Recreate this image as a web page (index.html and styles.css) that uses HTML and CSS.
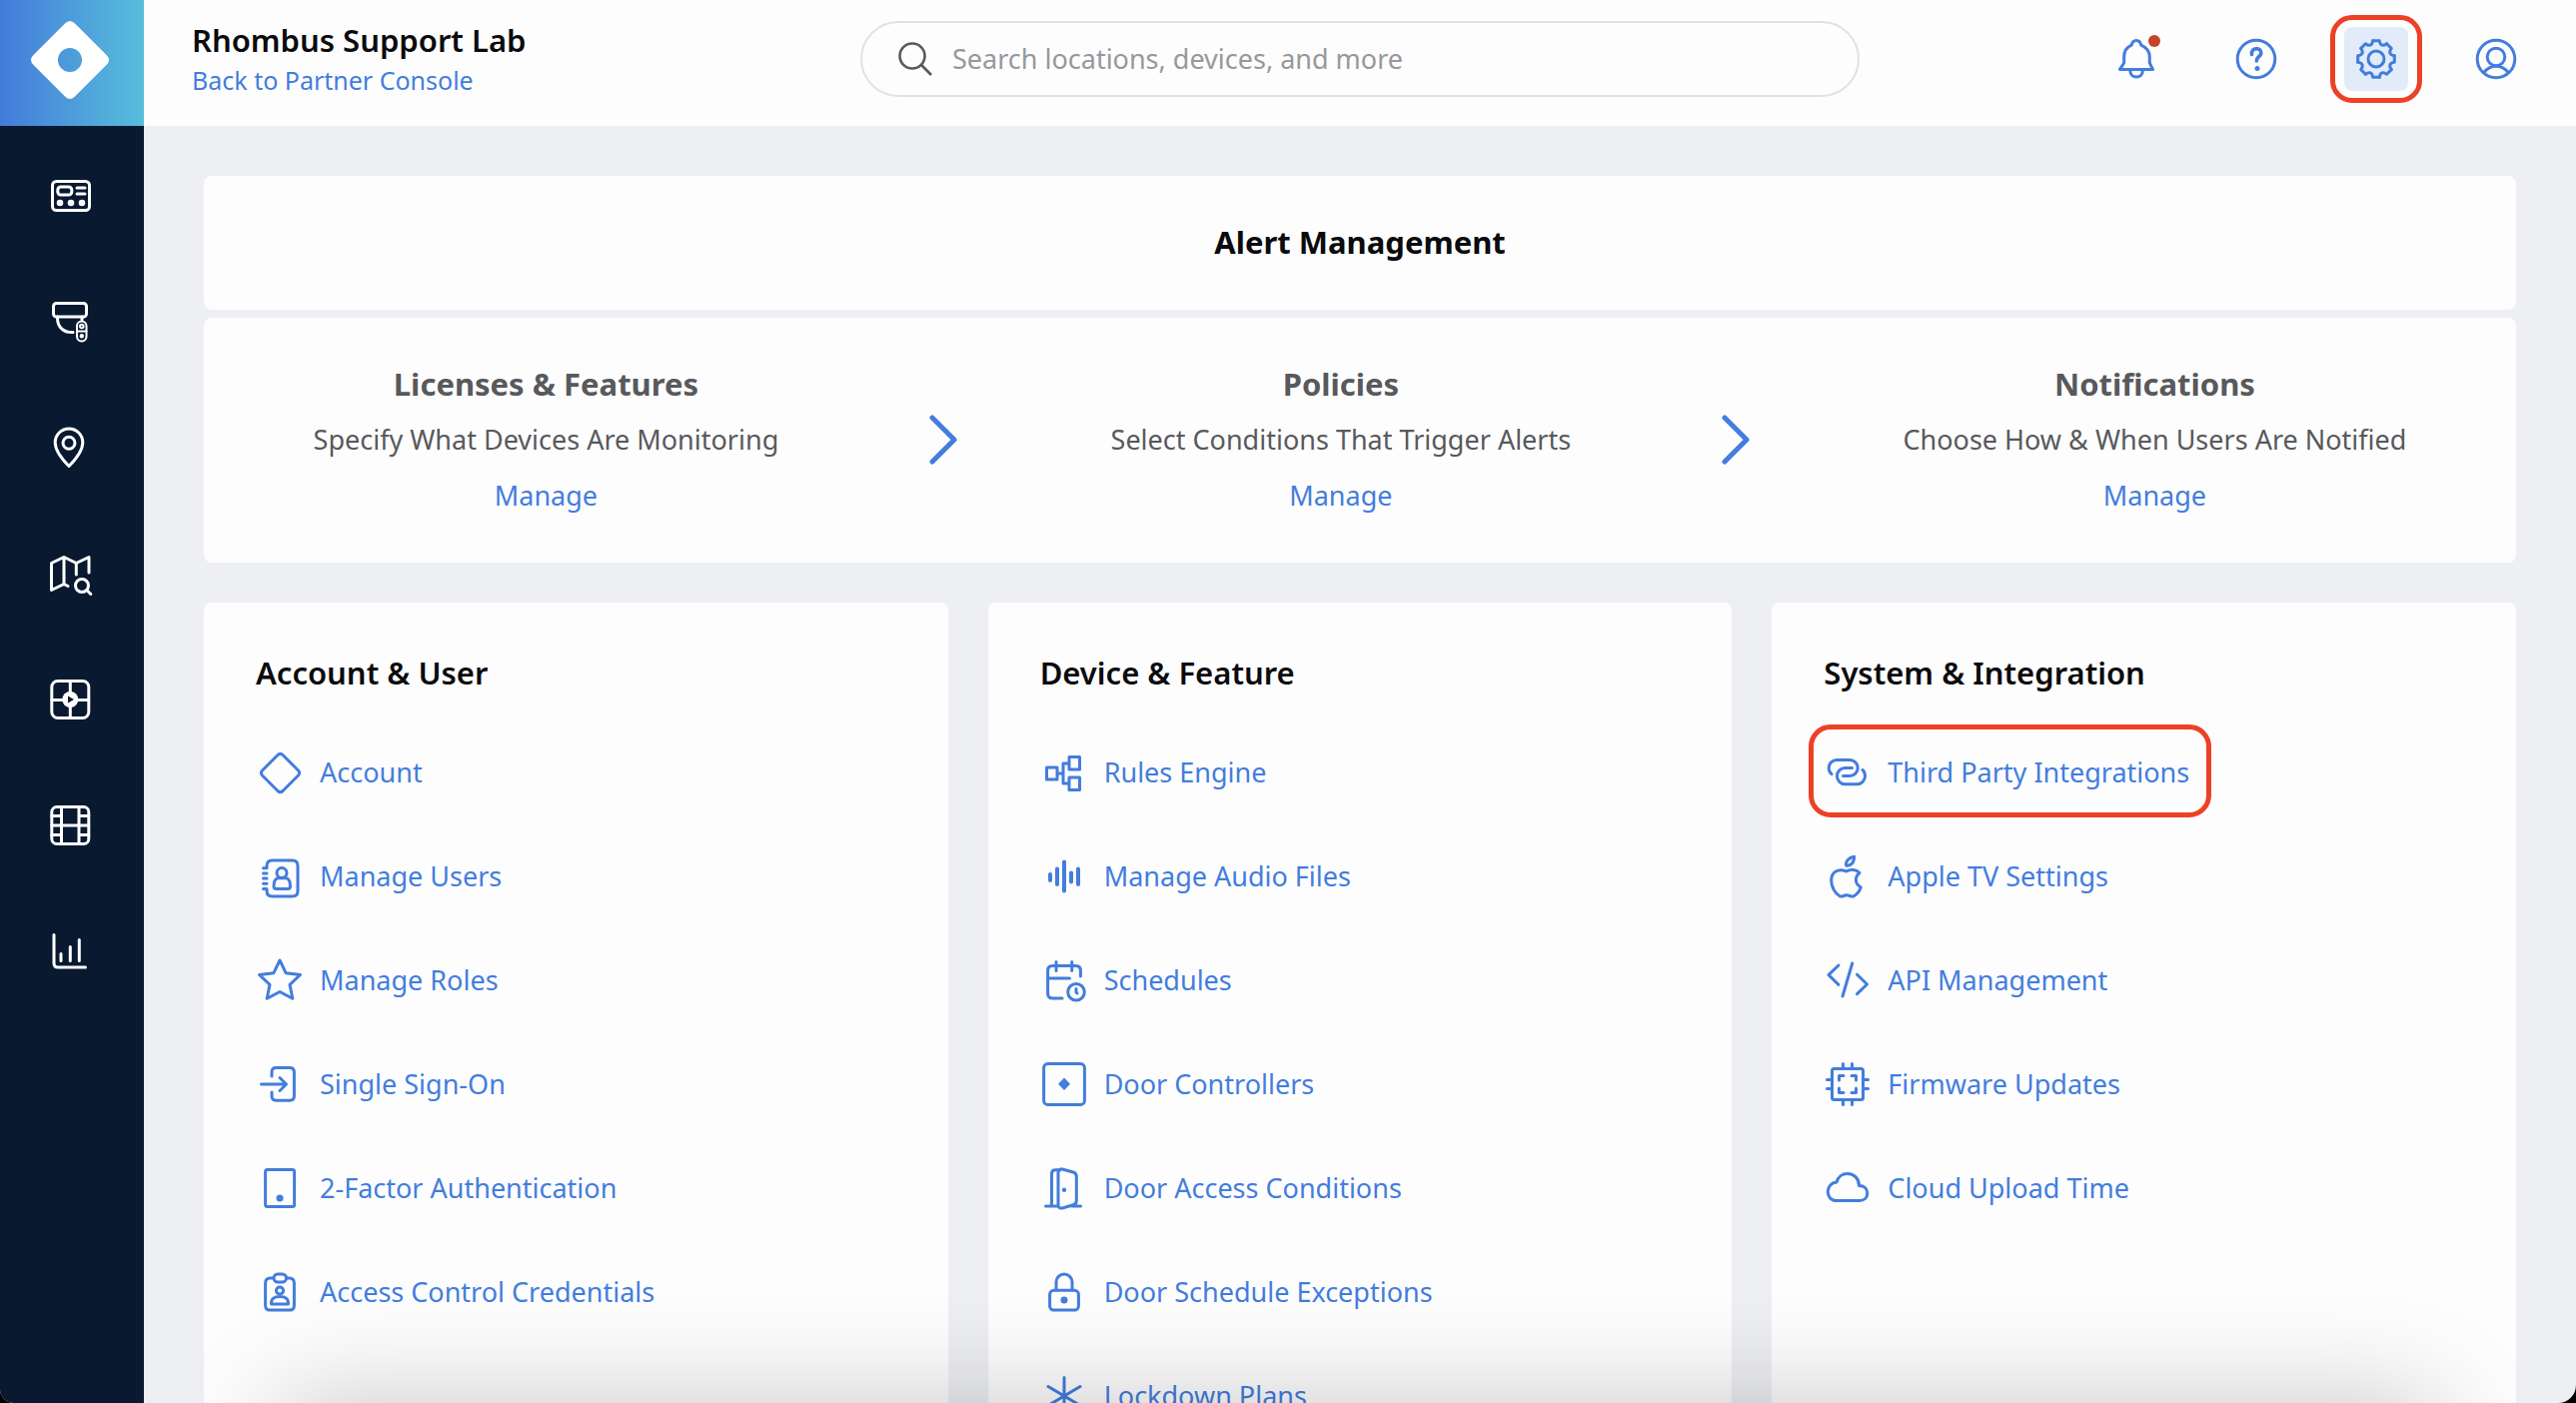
FILE: index.html
```html
<!DOCTYPE html>
<html lang="en">
<head>
<meta charset="utf-8">
<meta name="viewport" content="width=device-width, initial-scale=1">
<title>Settings - Rhombus Support Lab</title>
<link rel="stylesheet" href="styles.css">
</head>
<body>
<div class="app">
  <nav class="sidebar" aria-label="Main">
    <a class="logo" href="#" aria-label="Home">
      <svg viewBox="0 0 144 126"><path class="fill" fill-rule="evenodd" d="M65 23.5Q70 18.500 75 23.500L106.500 55Q111.500 60 106.500 65L75 96.500Q70 101.500 65 96.500L33.500 65Q28.500 60 33.500 55ZM70 48a12 12 0 1 0 0 24a12 12 0 1 0 0-24Z"/></svg>
    </a>
    <ul class="side-nav">
      <li><a class="side-link" href="#" aria-label="Dashboard"><svg class="icon" viewBox="0 0 48 48"><rect x="4.500" y="9.500" width="37" height="29" rx="4"/><rect x="9.800" y="15" width="14" height="8" rx="3"/><path d="M29 16h8M29 22h8"/><circle cx="12" cy="31" r="1.800"/><circle cx="23" cy="31" r="1.800"/><circle cx="34" cy="31" r="1.800"/></svg></a></li>
      <li><a class="side-link" href="#" aria-label="Devices"><svg class="icon" viewBox="0 0 48 48"><rect x="5.500" y="5.500" width="33" height="13.500" rx="3"/><path d="M9.500 19v1.500c0 9 6.500 14.500 15.500 14M34 19v3"/><rect class="thin" x="29" y="23.500" width="9.500" height="20" rx="4.700"/><path class="thin" d="M29 33.500h9.500"/><circle class="thin" cx="33.800" cy="28.500" r="1.800"/><circle class="fill" cx="33.800" cy="38.300" r="2.200"/></svg></a></li>
      <li><a class="side-link" href="#" aria-label="Locations"><svg class="icon" viewBox="0 0 48 48"><path d="M21 42.500C14 35.500 7.200 27 7.200 18.800a13.800 13.800 0 0 1 27.600 0C34.800 27 28 35.500 21 42.500Z"/><circle cx="21" cy="19.300" r="6"/></svg></a></li>
      <li><a class="side-link" href="#" aria-label="Map search"><svg class="icon" viewBox="0 0 48 48"><path d="M41 23V7.500L28.300 13.500 16 7.500 3.500 13.500V40.500L16 34.500 20 36.500M16 7.500v27M28.300 13.500V25"/><circle cx="34" cy="36" r="6.500"/><path d="M38.800 40.500l4 4"/></svg></a></li>
      <li><a class="side-link" href="#" aria-label="Video wall"><svg class="icon" viewBox="0 0 48 48"><rect x="3.800" y="5.500" width="37" height="37" rx="6"/><path d="M22.300 5.500v37M3.800 24.500h37"/><circle class="fill" cx="22.300" cy="24" r="8"/><path class="dark" d="M20 20.500v7l6-3.500z"/></svg></a></li>
      <li><a class="side-link" href="#" aria-label="Saved clips"><svg class="icon" viewBox="0 0 48 48"><rect x="3.800" y="5.500" width="37" height="37" rx="5"/><path d="M13.500 5.500v37M31 5.500v37M13.500 24h17.500M3.800 14.600h9.700M3.800 24h9.700M3.800 33.500h9.700M31 14.600h9.800M31 24h9.800M31 33.500h9.800"/></svg></a></li>
      <li><a class="side-link" href="#" aria-label="Reports"><svg class="icon" viewBox="0 0 48 48"><path d="M6 7.500V36q0 4 4 4h27.500M13 26.500v7M22.300 19.500v14M31.300 12.500v21"/></svg></a></li>
    </ul>
  </nav>

  <header class="topbar">
    <div class="org">
      <strong class="org-name">Rhombus Support Lab</strong>
      <a class="org-link" href="#">Back to Partner Console</a>
    </div>
    <label class="search">
      <svg class="search-icon" viewBox="0 0 34 34" aria-hidden="true"><circle cx="14" cy="14" r="12.500"/><path d="M23 23l10 10"/></svg>
      <input class="search-input" type="text" placeholder="Search locations, devices, and more" aria-label="Search">
    </label>
    <div class="actions">
      <button class="action" type="button" aria-label="Notifications"><svg class="icon" viewBox="0 0 64 64"><path d="M15.500 42.400h33L45.300 36V30C45.300 24.500 42 20.500 36.800 18.200C36.200 15 34.500 13.400 32 13.400S27.800 15 27.200 18.200C22 20.500 19.700 24.500 19.700 30V36ZM25.800 43.500c0 8.800 12.600 8.800 12.600 0"/></svg><span class="badge"></span></button>
      <button class="action" type="button" aria-label="Help"><svg class="icon" viewBox="0 0 64 64"><circle cx="32" cy="32" r="18.800"/><path class="bold" d="M27.500 27.500c-1-7.500 9.800-7.200 9.400-1.500C36.700 29.500 32.500 29.500 32.300 34"/><circle class="fill" cx="33" cy="41.500" r="2.500"/></svg></button>
      <button class="action is-active" type="button" aria-label="Settings"><svg class="icon" viewBox="0 0 64 64"><defs><path id="cog" d="M-3.300-18.300H3.300C4-13.500 6.700-12.400 10.600-15.300"/></defs><g transform="translate(32 32)"><use href="#cog"/><use href="#cog" transform="rotate(45)"/><use href="#cog" transform="rotate(90)"/><use href="#cog" transform="rotate(135)"/><use href="#cog" transform="rotate(180)"/><use href="#cog" transform="rotate(225)"/><use href="#cog" transform="rotate(270)"/><use href="#cog" transform="rotate(315)"/><circle r="8"/></g></svg></button>
      <button class="action" type="button" aria-label="Profile"><svg class="icon" viewBox="0 0 64 64"><circle cx="32" cy="32" r="18.800"/><circle cx="32" cy="30" r="8.800"/><path d="M19.800 45.500c6.500-8.500 17.900-8.500 24.400 0"/></svg></button>
    </div>
  </header>

  <main class="content">
    <section class="alerts">
      <h1 class="card alerts-title">Alert Management</h1>
      <div class="card steps">
        <div class="step"><h2 class="step-title">Licenses &amp; Features</h2><p class="step-text">Specify What Devices Are Monitoring</p><a class="step-link" href="#">Manage</a></div>
        <svg class="chevron" viewBox="0 0 30 52" aria-hidden="true"><path d="M3 4l22 22L3 48"/></svg>
        <div class="step"><h2 class="step-title">Policies</h2><p class="step-text">Select Conditions That Trigger Alerts</p><a class="step-link" href="#">Manage</a></div>
        <svg class="chevron" viewBox="0 0 30 52" aria-hidden="true"><path d="M3 4l22 22L3 48"/></svg>
        <div class="step"><h2 class="step-title">Notifications</h2><p class="step-text">Choose How &amp; When Users Are Notified</p><a class="step-link" href="#">Manage</a></div>
      </div>
    </section>

    <div class="columns">
      <section class="card group">
        <h2 class="group-title">Account &amp; User</h2>
        <ul class="links">
          <li><a class="link" href="#"><svg class="icon" viewBox="0 0 48 48"><path d="M22 6.500Q24.500 4.300 27 6.500L42.500 22Q44.700 24.500 42.500 27L27 42.500Q24.500 44.700 22 42.500L6.500 27Q4.300 24.500 6.500 22Z"/></svg>Account</a></li>
          <li><a class="link" href="#"><svg class="icon" viewBox="0 0 48 48"><path d="M11 15.700V13.500Q11 8 16.500 8H36.500Q42 8 42 13.500V38.500Q42 44 36.500 44H16.500Q11 44 11 38.500V36.500M7.500 15.700h3.500M7.500 20.900h3.500M7.500 26h3.500M7.500 31.200h3.500M7.500 36.400h3.500"/><circle cx="26" cy="20.500" r="5"/><path d="M22 25.700q-4 1.500-4 8.300 0 2.500 2.500 2.500h11.500q2.500 0 2.500-2.500 0-6.800-4-8.300z"/></svg>Manage Users</a></li>
          <li><a class="link" href="#"><svg class="icon" viewBox="0 0 48 48"><path d="M24 4L30.200 16.800 44.500 18.500 34 28.300 36.800 42.300 24 35.500 11.200 42.300 14 28.300 3.500 18.500 17.800 16.800Z"/></svg>Manage Roles</a></li>
          <li><a class="link" href="#"><svg class="icon" viewBox="0 0 48 48"><path d="M16 16V12Q16 7.600 20.400 7.600H34Q38.400 7.600 38.400 12V36Q38.400 40.200 34 40.200H20.400Q16 40.200 16 36V32M5.500 24H30M24 17.500l6.500 6.500-6.500 6.500"/></svg>Single Sign-On</a></li>
          <li><a class="link" href="#"><svg class="icon" viewBox="0 0 48 48"><rect x="9.600" y="5.600" width="29" height="37" rx="2"/><circle class="fill" cx="24" cy="34" r="3.500"/></svg>2-Factor Authentication</a></li>
          <li><a class="link" href="#"><svg class="icon" viewBox="0 0 48 48"><path d="M17.500 10H14.500Q9.600 10 9.600 15V37.500Q9.600 42 14 42H34Q38.400 42 38.400 37.500V15Q38.400 10 33.500 10H30.500"/><rect x="18" y="6" width="12.500" height="8" rx="4"/><circle cx="24" cy="22.500" r="3.600"/><path d="M15.500 36Q15 28.500 24 28.500T32.500 36Z"/></svg>Access Control Credentials</a></li>
        </ul>
      </section>
      <section class="card group">
        <h2 class="group-title">Device &amp; Feature</h2>
        <ul class="links">
          <li><a class="link" href="#"><svg class="icon" viewBox="0 0 48 48"><path d="M6.500 19H17V31H6.500ZM29 8.500H39.500V21H29ZM29 29H39.500V41.500H29ZM17 25H23M29 15H23V35H29"/></svg>Rules Engine</a></li>
          <li><a class="link" href="#"><svg class="icon" viewBox="0 0 48 48"><path class="bar" d="M10 22v6M17 16.500v15.500M24 9.500V38.500M31 20.500v9M38 16.500v15.500"/></svg>Manage Audio Files</a></li>
          <li><a class="link" href="#"><svg class="icon" viewBox="0 0 48 48"><path d="M22 42H12.500Q7.600 42 7.600 37.500V14.500Q7.600 9.600 12.500 9.600H35.500Q40.400 9.600 40.400 14.500V20M7.600 22H29.500M16 5.500v9M31.700 5.500v9"/><circle cx="36" cy="35.700" r="8.300"/><path d="M36 32.500v3.500l1 1"/></svg>Schedules</a></li>
          <li><a class="link" href="#"><svg class="icon" viewBox="0 0 48 48"><rect x="3.600" y="3.600" width="40.800" height="40.800" rx="4"/><path class="fill" d="M24 17.500L30 23.800 24 30 18 23.800Z"/></svg>Door Controllers</a></li>
          <li><a class="link" href="#"><svg class="icon" viewBox="0 0 48 48"><path d="M5.500 42H18M32 42H40.500M11.500 42V9.500Q11.500 5.700 15.500 5.700H20M18 42V8Q18.500 4.500 22 5L33 8Q36.300 9 36.300 12.500V36.500Q36.300 39.800 33 40.800L23 43.800Q18.500 45 18 41"/><circle class="fill" cx="24" cy="25.700" r="2.200"/></svg>Door Access Conditions</a></li>
          <li><a class="link" href="#"><svg class="icon" viewBox="0 0 48 48"><rect x="9.600" y="22.300" width="28.800" height="19.800" rx="4"/><path d="M16 22V14a8 8 0 0 1 16 0V22"/><circle class="fill" cx="24" cy="32" r="3.500"/></svg>Door Schedule Exceptions</a></li>
          <li><a class="link" href="#"><svg class="icon" viewBox="0 0 48 48"><path d="M24 5.500V42.500M8 14.500L40 33.500M40 14.500L8 33.500"/></svg>Lockdown Plans</a></li>
        </ul>
      </section>
      <section class="card group">
        <h2 class="group-title">System &amp; Integration</h2>
        <ul class="links">
          <li><a class="link is-marked" href="#"><svg class="icon" viewBox="0 0 48 48"><path d="M8 25.700C6 24 5.200 22 5.200 19.500a8 8 0 0 1 8-8H26.200a8 8 0 0 1 0 16H19.500M28.500 19.500H21.500a8.100 8.100 0 0 0 0 16.200H33.500a8 8 0 0 0 8-8C41.500 25 41 23 39 21.500"/></svg>Third Party Integrations</a></li>
          <li><a class="link" href="#"><svg class="icon" viewBox="0 0 48 48"><path d="M30.500 4.200C25.500 5 21.500 9 22.700 13.200C27.500 13.800 31 9.500 30.500 4.200ZM36 20.500C32.500 17 27 16.500 22.500 19C15 15.500 7.700 19.500 7.700 28C7.700 34 11 41 16.500 44C19 44.500 20.500 42.800 23 42.800S27.500 44.500 30 44C33.500 42 36 38.500 37.300 35C31.500 31.500 30.500 25 36 20.500Z"/></svg>Apple TV Settings</a></li>
          <li><a class="link" href="#"><svg class="icon" viewBox="0 0 48 48"><path d="M15 9L5 18.700 15 28.300M28.700 7L19 40M33.500 18.200L43.500 28 33.500 37.700"/></svg>API Management</a></li>
          <li><a class="link" href="#"><svg class="icon" viewBox="0 0 48 48"><rect x="8.500" y="8.500" width="31" height="31" rx="2"/><path d="M19.500 3.500v5M28.500 3.500v5M19.500 39.500v5M28.500 39.500v5M3.500 19.500h5M3.500 28.500h5M39.500 19.500h5M39.500 28.500h5M15.500 20V15.500H20M28 15.500H32.500V20M32.500 28V32.500H28M20 32.500H15.500V28"/></svg>Firmware Updates</a></li>
          <li><a class="link" href="#"><svg class="icon" viewBox="0 0 48 48"><path d="M13 36.500C7 36.500 4.200 32 4.200 27.500C4.200 22.500 8 18.500 13 18C14.500 12.500 19 9.500 24 9.500C30.500 9.500 35.500 14.500 35.500 21.500C40.500 21.500 43.800 24.500 43.800 29S40.500 36.500 36 36.500Z"/></svg>Cloud Upload Time</a></li>
        </ul>
      </section>
    </div>
  </main>
  <div class="dock-shadow"></div>
</div>
</body>
</html>
```
FILE: styles.css
```css
:root {
  --blue: #437ddd;
  --navy: #081930;
  --ink: #0b0b0d;
  --gray: #58595c;
  --mark: #ec4126;
}

* { box-sizing: border-box; }

html { background: #000; }

body {
  margin: 0;
  font-family: "Noto Sans", "Open Sans", sans-serif;
  font-size: 27px;
  line-height: 44px;
  color: var(--ink);
}

h1, h2, p, ul { margin: 0; padding: 0; }
ul { list-style: none; }
a { color: var(--blue); text-decoration: none; }

.app {
  position: relative;
  display: grid;
  grid-template-columns: 144px minmax(0, 1fr);
  grid-template-rows: 126px minmax(0, 1fr);
  height: 100vh;
  overflow: hidden;
  background: #eeeff3;
  border-radius: 0 0 18px 14px;
}

.icon {
  flex: none;
  width: 48px;
  height: 48px;
  fill: none;
  stroke: currentColor;
  stroke-width: 3;
  stroke-linecap: round;
  stroke-linejoin: round;
}
.icon .fill { fill: currentColor; stroke: none; }
.icon .dark { fill: var(--navy); stroke: none; }
.icon .thin { stroke-width: 2; }
.icon .bold { stroke-width: 3.6; }
.icon .bar { stroke-width: 4; }

/* Sidebar */
.sidebar {
  grid-row: 1 / 3;
  background: var(--navy);
}
.logo {
  display: block;
  height: 126px;
  background: linear-gradient(90deg, #447bda, #57bedb);
}
.logo svg { display: block; width: 100%; height: 100%; }
.logo .fill { fill: #fff; }
.side-nav { padding-top: 7px; }
.side-link {
  display: flex;
  align-items: center;
  justify-content: center;
  height: 126px;
  color: #fff;
}

/* Top bar */
.topbar {
  display: grid;
  grid-template-columns: 1fr minmax(0, 1000px) 1fr;
  align-items: center;
  padding: 0 48px 8px;
  background: #fdfdfe;
}
.org {
  display: flex;
  flex-direction: column;
  padding-top: 2px;
  line-height: 40px;
}
.org-name { font-size: 31px; font-weight: 600; }
.org-link { font-size: 25px; }
.search {
  display: flex;
  align-items: center;
  gap: 20px;
  height: 76px;
  padding: 0 36px;
  border: 2px solid #dfe1e5;
  border-radius: 38px;
}
.search-icon {
  flex: none;
  width: 34px;
  height: 34px;
  fill: none;
  stroke: var(--gray);
  stroke-width: 2.6;
}
.search-input {
  flex: 1;
  min-width: 0;
  padding: 0;
  border: 0;
  outline: 0;
  background: none;
  font: inherit;
  color: var(--ink);
}
.search-input::placeholder { color: #97989b; opacity: 1; }
.actions {
  display: flex;
  justify-content: flex-end;
  gap: 56px;
}
.action {
  position: relative;
  width: 64px;
  height: 64px;
  padding: 0;
  border: 0;
  border-radius: 8px;
  background: none;
  color: var(--blue);
}
.action .icon { display: block; width: 64px; height: 64px; }
.action.is-active { background: #e2ecf9; }
.action.is-active::after,
.link.is-marked::after {
  content: "";
  position: absolute;
  border: 5px solid var(--mark);
  border-radius: 22px;
}
.action.is-active::after { inset: -12px -14px; }
.badge {
  position: absolute;
  top: 8px;
  right: 8px;
  width: 12px;
  height: 12px;
  border-radius: 50%;
  background: #c8412b;
}

/* Content */
.content {
  display: flex;
  flex-direction: column;
  gap: 40px;
  padding: 50px 60px;
  overflow-y: auto;
  scrollbar-width: none;
}
.card {
  background: #fdfdfe;
  border-radius: 8px;
}
.alerts {
  display: flex;
  flex-direction: column;
  gap: 8px;
}
.alerts-title {
  padding: 43px 44px 45px;
  font-size: 31px;
  font-weight: 700;
  line-height: 46px;
  text-align: center;
}
.steps {
  display: flex;
  align-items: center;
  justify-content: space-around;
  padding: 44px 34px 45px;
}
.step {
  display: flex;
  flex-direction: column;
  align-items: center;
  gap: 12px;
  color: var(--gray);
}
.step-title {
  font-size: 31px;
  font-weight: 700;
  line-height: 44px;
}
.chevron {
  flex: none;
  width: 30px;
  height: 52px;
  fill: none;
  stroke: var(--blue);
  stroke-width: 5;
  stroke-linecap: round;
  stroke-linejoin: round;
}
.columns {
  flex: none;
  display: grid;
  grid-template-columns: repeat(3, minmax(0, 1fr));
  gap: 40px;
}
.group { padding: 48px 52px; }
.group-title {
  margin-bottom: 26px;
  font-size: 31px;
  font-weight: 600;
  line-height: 44px;
}
.link {
  position: relative;
  display: inline-flex;
  align-items: center;
  gap: 16px;
  height: 104px;
}
.link.is-marked::after { inset: 4px -22px 7px -15px; }
.links li { display: flex; }

/* Soft shade rising from the lower edge of the window */
.dock-shadow {
  position: absolute;
  top: 100%;
  left: 280px;
  right: 140px;
  height: 120px;
  box-shadow: 0 0 110px rgba(0, 0, 0, 0.22);
  pointer-events: none;
}
```
